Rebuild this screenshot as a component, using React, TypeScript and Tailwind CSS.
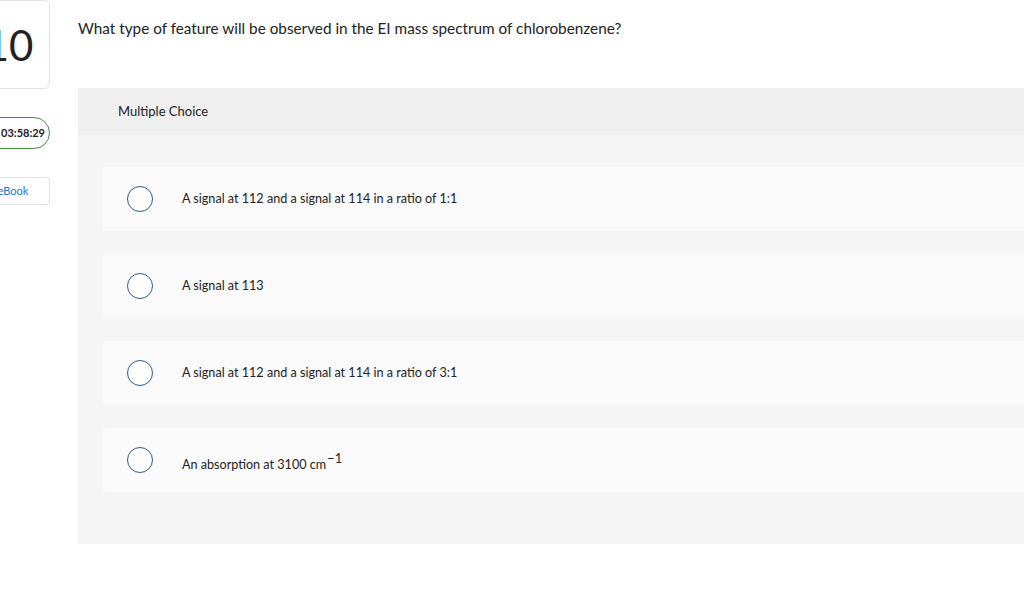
import React from "react";

const OPTIONS: React.ReactNode[] = [
  "A signal at 112 and a signal at 114 in a ratio of 1:1",
  "A signal at 113",
  "A signal at 112 and a signal at 114 in a ratio of 3:1",
  <>
    An absorption at 3100 cm
    <span className="text-[13px] relative -top-[6px] ml-[1px]">−1</span>
  </>,
];

function Radio() {
  return (
    <span className="w-[26px] h-[26px] shrink-0 rounded-full border-[1.5px] border-[#2a5a8c] bg-white" />
  );
}

export default function App() {
  return (
    <div
      className="w-[1024px] h-[593px] overflow-hidden bg-white flex text-[#222]"
      style={{ fontFamily: "Lato, 'Open Sans', sans-serif" }}
    >
      {/* left rail */}
      <div className="w-[50px] shrink-0 flex flex-col items-end">
        <div className="w-[82px] h-[89px] shrink-0 border border-[#e3e3e3] rounded-[5px] flex items-center justify-center text-[42px] text-[#222] leading-none">
          10
        </div>
        <div className="mt-[28px] w-[80px] h-[32px] shrink-0 border border-[#4d8a46] rounded-full bg-white flex items-center justify-end pr-[4px] text-[11px] font-bold">
          03:58:29
        </div>
        <div className="mt-[28px] w-[74px] h-[28px] shrink-0 border border-[#e3e3e3] rounded-[3px] flex items-center justify-center text-[11px] text-[#2a72c2]">
          eBook
        </div>
      </div>

      {/* main */}
      <div className="ml-[28px] w-[980px] shrink-0 flex flex-col">
        <div className="h-[88px] shrink-0 pt-[18px] text-[15.3px] leading-[20px]">
          What type of feature will be observed in the EI mass spectrum of chlorobenzene?
        </div>
        <div className="bg-[#f5f5f5] flex flex-col">
          <div className="h-[47px] bg-[#efefef] flex items-center pl-[40px] text-[13px]">
            Multiple Choice
          </div>
          <div className="pt-[32px] pb-[52px] pl-[25px] flex flex-col gap-[23px]">
            {OPTIONS.map((opt, i) => (
              <div
                key={i}
                className="h-[64px] bg-[#fafafa] rounded-[3px] flex items-center pl-[24px] gap-[29px] text-[12.6px]"
              >
                <Radio />
                <span className={i === 3 ? "pt-[10px]" : "pt-[1px]"}>{opt}</span>
              </div>
            ))}
          </div>
        </div>
      </div>
    </div>
  );
}
